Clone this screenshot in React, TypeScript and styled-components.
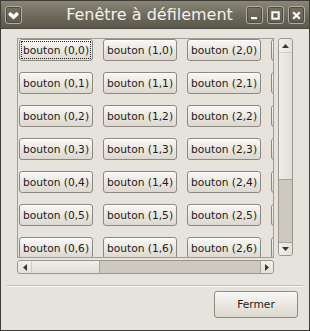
import styled, { createGlobalStyle } from "styled-components";

const GlobalStyle = createGlobalStyle`
    html, body {
        margin: 0;
        padding: 0;
        background: #e6e3dc;
    }
    * { box-sizing: border-box; }
`;

const FONT = '"DejaVu Sans", "Liberation Sans", sans-serif';

const COLS = 10;
const ROWS = 10;

const Window = styled.div({
    width: '310px',
    height: '331px',
    border: '1px solid #3f3c35',
    backgroundColor: '#e6e3dc',
    display: 'flex',
    flexDirection: 'column',
    fontFamily: FONT,
    overflow: 'hidden',
});

const TitleBar = styled.div({
    height: '28px',
    flexShrink: 0,
    display: 'flex',
    alignItems: 'center',
    padding: '0 4px',
    background: 'linear-gradient(#8a8677, #6a6658 60%, #5c584b)',
    borderBottom: '1px solid #4a473f',
});

const Title = styled.div({
    flex: 1,
    textAlign: 'center',
    paddingLeft: '31px',
    color: '#f4f2ec',
    fontSize: '16px',
    whiteSpace: 'nowrap',
});

const TitleButtons = styled.div({
    display: 'flex',
    gap: '4px',
});

const TitleButton = styled.div({
    width: '17px',
    height: '18px',
    borderRadius: '3px',
    border: '1px solid #b3af9f',
    boxShadow: 'inset 0 0 0 1px #4e4b40',
    background: 'linear-gradient(#736f61, #5f5b4e)',
    display: 'flex',
    alignItems: 'center',
    justifyContent: 'center',
    marginTop: '1px',
});

const Body = styled.div({
    flex: 1,
    display: 'flex',
    flexDirection: 'column',
    padding: '9px 6px 0 6px',
});

const ScrollArea = styled.div({
    display: 'grid',
    gridTemplateColumns: '257px 15px',
    gridTemplateRows: '220px 14px',
    columnGap: '4px',
    rowGap: '2px',
    margin: '0 10px',
});

const Viewport = styled.div({
    border: '1px solid #a19d92',
    overflow: 'hidden',
    backgroundColor: '#e6e3dc',
});

const ButtonGrid = styled.div({
    display: 'grid',
    gridTemplateColumns: `repeat(${COLS}, 74px)`,
    columnGap: '10px',
    rowGap: '11px',
    padding: '0 0 0 1px',
    width: 'max-content',
});

const GtkButton = styled.div<{ $focused?: boolean; $w: number; $h: number }>(props => ({
    width: `${props.$w}px`,
    height: `${props.$h}px`,
    border: '1px solid #8d897e',
    borderRadius: '3px',
    background: 'linear-gradient(#f8f7f4, #ebe8e2 50%, #dcd8cf)',
    boxShadow: 'inset 0 1px 0 #ffffff',
    display: 'flex',
    alignItems: 'center',
    justifyContent: 'center',
    fontSize: '10.67px',
    color: '#1c1b18',
    whiteSpace: 'nowrap',
    outline: props.$focused ? '1px dotted #222' : 'none',
    outlineOffset: '-3px',
}));

const VScroll = styled.div({
    height: '218px',
    display: 'flex',
    flexDirection: 'column',
    border: '1px solid #9a968b',
    borderRadius: '3px',
    overflow: 'hidden',
    backgroundColor: '#cdc9bf',
});

const HScroll = styled.div({
    display: 'flex',
    border: '1px solid #9a968b',
    borderRadius: '3px',
    overflow: 'hidden',
    backgroundColor: '#cdc9bf',
});

const Stepper = styled.div<{ $vertical?: boolean }>(props => ({
    flex: '0 0 13px',
    display: 'flex',
    alignItems: 'center',
    justifyContent: 'center',
    background: props.$vertical
        ? 'linear-gradient(90deg, #f2f0ec, #e4e1da)'
        : 'linear-gradient(#f2f0ec, #e4e1da)',
}));

const Thumb = styled.div<{ $vertical?: boolean; $size: number }>(props => ({
    flex: `0 0 ${props.$size}px`,
    background: props.$vertical
        ? 'linear-gradient(90deg, #f0eeea, #e2dfd8)'
        : 'linear-gradient(#f0eeea, #e2dfd8)',
    [props.$vertical ? 'borderTop' : 'borderLeft']: '1px solid #d0ccc3',
    [props.$vertical ? 'borderBottom' : 'borderRight']: '1px solid #a8a498',
}));

const Trough = styled.div({
    flex: 1,
});

const StepperEnd = styled(Stepper)<{ $vertical?: boolean }>(props => ({
    [props.$vertical ? 'borderTop' : 'borderLeft']: '1px solid #a8a498',
}));

const Separator = styled.div({
    marginTop: '11px',
    height: '2px',
    borderTop: '1px solid #c3bfb5',
    borderBottom: '1px solid #f7f6f3',
});

const ActionRow = styled.div({
    display: 'flex',
    justifyContent: 'flex-end',
    padding: '4px 5px 0 0',
});

const Arrow = ({ dir }: { dir: 'up' | 'down' | 'left' | 'right' }) => {
    const pts = {
        up: '0,4 3.5,0 7,4',
        down: '0,0 7,0 3.5,4',
        left: '4,0 4,7 0,3.5',
        right: '0,0 0,7 4,3.5',
    }[dir];
    const vertical = dir === 'up' || dir === 'down';
    return (
        <svg width={vertical ? 7 : 4} height={vertical ? 4 : 7} viewBox={vertical ? '0 0 7 4' : '0 0 4 7'}>
            <polygon points={pts} fill="#3a3832" />
        </svg>
    );
};

const MenuIcon = () => (
    <svg width="11" height="9" viewBox="0 0 11 9">
        <path d="M0.5 2.5 L2.5 1 L5.5 3.8 L8.5 1 L10.5 2.5 L10.5 4 L5.5 8.5 L0.5 4 Z" fill="#ffffff" />
    </svg>
);

const MinIcon = () => (
    <svg width="9" height="9" viewBox="0 0 9 9">
        <rect x="1" y="6" width="6" height="2.2" fill="#ffffff" />
    </svg>
);

const MaxIcon = () => (
    <svg width="9" height="9" viewBox="0 0 9 9">
        <rect x="1.3" y="1.3" width="6.4" height="6.4" fill="none" stroke="#ffffff" strokeWidth="2" />
    </svg>
);

const CloseIcon = () => (
    <svg width="9" height="9" viewBox="0 0 9 9">
        <path d="M1.2 1.2 L7.8 7.8 M7.8 1.2 L1.2 7.8" stroke="#ffffff" strokeWidth="2.2" />
    </svg>
);

const App = () => {
    const cells: { c: number; r: number }[] = [];
    for (let r = 0; r < ROWS; r++) {
        for (let c = 0; c < COLS; c++) {
            cells.push({ c, r });
        }
    }

    return <>
        <GlobalStyle />
        <Window>
            <TitleBar>
                <TitleButton><MenuIcon /></TitleButton>
                <Title>Fenêtre à défilement</Title>
                <TitleButtons>
                    <TitleButton><MinIcon /></TitleButton>
                    <TitleButton><MaxIcon /></TitleButton>
                    <TitleButton><CloseIcon /></TitleButton>
                </TitleButtons>
            </TitleBar>
            <Body>
                <ScrollArea>
                    <Viewport>
                        <ButtonGrid>
                            {cells.map(({ c, r }) => (
                                <GtkButton key={`${c}-${r}`} $w={74} $h={22} $focused={c === 0 && r === 0}>
                                    {`bouton (${c},${r})`}
                                </GtkButton>
                            ))}
                        </ButtonGrid>
                    </Viewport>
                    <VScroll>
                        <Stepper $vertical><Arrow dir="up" /></Stepper>
                        <Thumb $vertical $size={128} />
                        <Trough />
                        <StepperEnd $vertical><Arrow dir="down" /></StepperEnd>
                    </VScroll>
                    <HScroll>
                        <Stepper><Arrow dir="left" /></Stepper>
                        <Thumb $size={69} />
                        <Trough />
                        <StepperEnd><Arrow dir="right" /></StepperEnd>
                    </HScroll>
                </ScrollArea>
                <Separator />
                <ActionRow>
                    <GtkButton $w={84} $h={27}>Fermer</GtkButton>
                </ActionRow>
            </Body>
        </Window>
    </>;
};

export default App;
